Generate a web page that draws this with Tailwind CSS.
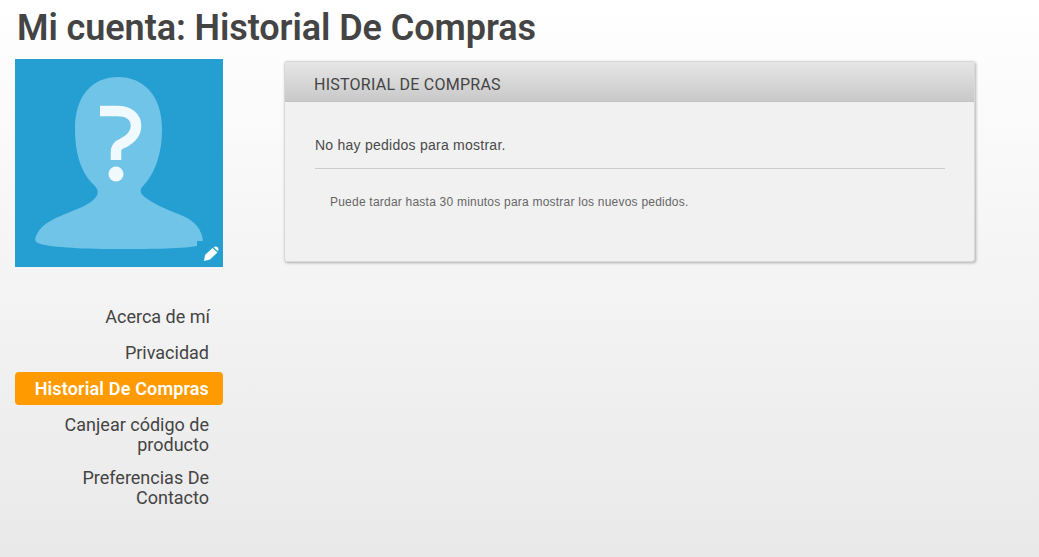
<!DOCTYPE html>
<html lang="es">
<head>
    <meta charset="UTF-8">
    <title>Mi cuenta: Historial De Compras</title>
    <script src="https://cdn.jsdelivr.net/npm/@tailwindcss/browser@4"></script>
</head>
<body class="h-[557px] overflow-hidden bg-gradient-to-b from-white to-[#e9e9e9] font-['Liberation_Sans',sans-serif] text-[#444]">
    <h1 class="pl-[17px] pt-[8px] h-[59px] font-['Roboto',sans-serif] text-[36px] leading-[40px] font-semibold tracking-[-0.07px] text-[#444]">Mi cuenta: Historial De Compras</h1>
    <div class="flex pl-[15px] gap-[61px]">
        <div class="w-[208px]">
            <div class="relative w-[208px] h-[208px] bg-[#259ed2]">
                <svg width="208" height="208" viewBox="0 0 208 208">
                    <path fill="#70c4e8" d="M103 18C128 18 147 36 147 70C147 100 137 118 128 127C124 131 125 135 131 139C140 146 156 152 168 157C180 162 187 171 188 182H182V187C165 190 130 190 100 190C65 190 32 188 23 184C19 182 20 179 22 175C27 165 38 160 50 155C62 150 75 146 81 138C84 134 83 130 79 126C68 116 60 98 60 70C60 36 78 18 103 18Z"/>
                    <path fill="none" stroke="#f0f9fd" stroke-width="10.5" d="M85 52H102C114 52 121 58 121 67C121 76 114 81 108 84C103 86 101 88 101 93V101"/>
                    <circle cx="101" cy="115" r="7.5" fill="#f0f9fd"/>
                    <path fill="#fff" d="M189 202L190 196L197.500 189L202.500 193.500L195 200.500Z"/>
                    <path fill="#fff" d="M198.500 188.200C200.500 186.800 203.500 187.800 203.500 190.800C203.500 191.300 203.300 191.800 203 192.300Z"/>
                </svg>
            </div>
            <nav class="mt-[33px] flex flex-col font-['Roboto',sans-serif] text-[18px] leading-[20px] text-right text-[#444]">
                <a class="pl-[14px] pr-[13px] py-[6.5px]">Acerca de mí</a>
                <a class="px-[14px] py-[6.5px] mt-[3px]">Privacidad</a>
                <a class="px-[14px] py-[6.5px] mt-[3px] rounded-[4px] bg-[#ff9b00] text-white font-semibold tracking-[0.15px]">Historial De Compras</a>
                <a class="px-[14px] py-[5px] mt-[5px]">Canjear código de producto</a>
                <a class="px-[14px] py-[5px] mt-[3px]">Preferencias De Contacto</a>
            </nav>
        </div>
        <div class="mt-[2px] w-[691px] h-[201px] rounded-[3px] bg-[#f1f1f1] border border-[#d8d8d8] shadow-[1px_1px_3px_rgba(0,0,0,0.3)]">
            <div class="h-[40px] pl-[29px] bg-gradient-to-b from-[#e6e6e6] to-[#c9c9c9] border-b border-[#c4c4c4] font-['Roboto',sans-serif] text-[16px] leading-[46px] tracking-[0.25px] text-[#444]">HISTORIAL DE COMPRAS</div>
            <div class="pl-[30px] pr-[29px]">
                <p class="pt-[34px] pb-[14px] text-[14px] leading-[18px] tracking-[0.25px] border-b border-[#ccc] text-[#4a4a4a]">No hay pedidos para mostrar.</p>
                <p class="pl-[15px] pt-[25px] text-[12px] leading-[16px] tracking-[0.22px] text-[#666]">Puede tardar hasta 30 minutos para mostrar los nuevos pedidos.</p>
            </div>
        </div>
    </div>
</body>
</html>
